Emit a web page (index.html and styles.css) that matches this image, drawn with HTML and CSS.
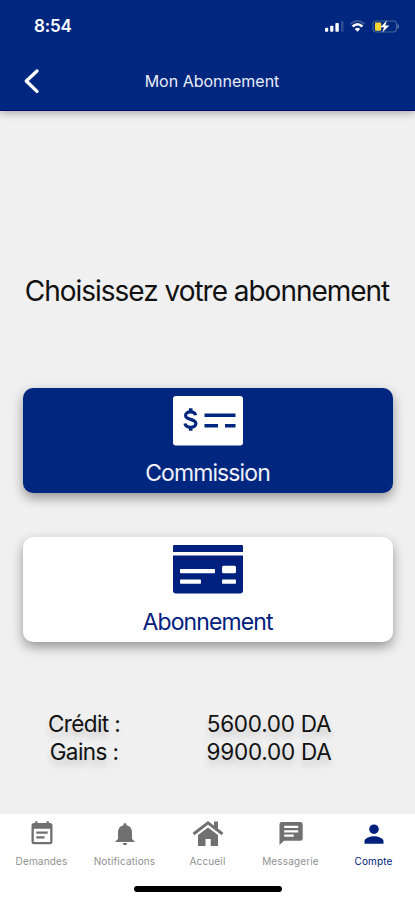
FILE: index.html
```html
<!DOCTYPE html>
<html lang="fr">
<head>
<meta charset="utf-8">
<title>Mon Abonnement</title>
<link rel="stylesheet" href="styles.css">
</head>
<body>
<div class="screen">
  <header class="header">
    <div class="status">
      <span class="clock">8:54</span>
      <svg class="status-icons" width="76" height="16" viewBox="0 0 76 16">
        <g fill="#fff">
          <rect x="0" y="9.8" width="3.2" height="4" rx=".8"/>
          <rect x="5.2" y="7.8" width="3.2" height="6" rx=".8"/>
          <rect x="10.4" y="5" width="3.4" height="8.8" rx=".8"/>
          <rect x="16" y="3" width="2.6" height="10.8" rx=".8" fill="#2d4b93"/>
        </g>
        <path d="M25.5 6Q32.5 0 39.5 6" fill="none" stroke="#3a5799" stroke-width="1.8"/>
        <path d="M27.6 8.5Q32.5 4 37.4 8.5" fill="none" stroke="#fff" stroke-width="2.6"/>
        <path d="M29.8 10.9Q32.5 8.6 35.2 10.9L32.5 13.8z" fill="#fff"/>
        <rect x="48" y="3" width="23.5" height="11" rx="3.4" fill="none" stroke="#496698" stroke-width="1.1"/>
        <path d="M72.5 5.5Q75.5 8.3 72.5 11z" fill="#7186a9"/>
        <rect x="50" y="4.4" width="6.2" height="8.4" rx="1.2" fill="#f8d734"/>
        <path d="M61.8 2.6L55.4 9.3H59L57.3 14.5L64.4 7.5H60.4z" fill="#fff"/>
      </svg>
    </div>
    <div class="titlebar">
      <svg class="back" width="18" height="28" viewBox="0 0 18 28"><path d="M15 4L4.3 14L15 24.4" fill="none" stroke="#fff" stroke-width="3.4" stroke-linecap="round" stroke-linejoin="round"/></svg>
      <h1 class="title">Mon Abonnement</h1>
    </div>
  </header>
  <main class="content">
    <h2 class="heading">Choisissez votre abonnement</h2>
    <div class="card card-primary">
      <svg width="70" height="50" viewBox="0 0 70 50">
        <rect width="70" height="49.5" rx="3" fill="#fff"/>
        <g fill="none" stroke="#00277f">
          <path d="M22.5 19.2C21.8 14.8 12.6 14.8 12.6 19.4C12.6 24.4 22.9 22.4 22.9 27.6C22.9 32.5 12.8 32.4 12 27.6" stroke-width="3.2"/>
          <path d="M17.7 12.2V17M17.7 30V34.8" stroke-width="3.6"/>
          <path d="M31.5 19.3H62.5M31.5 29.8H45M52 29.8H62.5" stroke-width="3.6"/>
        </g>
      </svg>
      <span class="card-label">Commission</span>
    </div>
    <div class="card">
      <svg width="70" height="50" viewBox="0 0 70 50">
        <path d="M1 0H69Q70 0 70 1V7H0V1Q0 0 1 0zM0 10.5H70V45.5Q70 48.5 67 48.5H3Q0 48.5 0 45.5z" fill="#00207e"/>
        <g fill="#fff">
          <rect x="7" y="24" width="35" height="4.2" rx=".8"/>
          <rect x="7" y="34.5" width="21" height="4.2" rx=".8"/>
          <rect x="49" y="20.8" width="14" height="7.4" rx="1.5"/>
          <rect x="49" y="34.5" width="14" height="4.2" rx=".8"/>
        </g>
      </svg>
      <span class="card-label">Abonnement</span>
    </div>
    <div class="balances">
      <div class="names"><span>Crédit :</span><span>Gains :</span></div>
      <div class="amounts"><span>5600.00 DA</span><span>9900.00 DA</span></div>
    </div>
  </main>
  <nav class="tabs">
    <div class="tab">
      <svg width="28" height="28" viewBox="0 0 28 28"><path fill="currentColor" fill-rule="evenodd" d="M7.2 1.3H9.5V3H18.5V1.3H20.8V3H22Q24.5 3 24.5 5.5V21.8Q24.5 24.3 22 24.3H6Q3.5 24.3 3.5 21.8V5.5Q3.5 3 6 3H7.2zM5.8 8.7V22H22.2V8.7zM8.3 11.6H19.7V13.8H8.3zM8.3 16.2H16.5V18.4H8.3z"/></svg>
      <span>Demandes</span>
    </div>
    <div class="tab">
      <svg width="28" height="28" viewBox="0 0 28 28"><path fill="currentColor" d="M12.5 5.2V4.5Q12.5 3 14 3T15.5 4.5V5.2C19.5 6 21 9 21 12.5V19L23.5 21.3V22H4.5V21.3L7 19V12.5C7 9 8.5 6 12.5 5.2zM11.7 23H16.3Q16 25.3 14 25.3T11.7 23z"/></svg>
      <span>Notifications</span>
    </div>
    <div class="tab">
      <svg width="32" height="28" viewBox="0 0 32 28"><path d="M1.5 14L16 2.9L30.5 14" fill="none" stroke="currentColor" stroke-width="2.9"/><path fill="currentColor" d="M22 1.5H26V11L22 8zM16 7.4L26 15V26H18.7V19H13.5V26H6V15z"/></svg>
      <span>Accueil</span>
    </div>
    <div class="tab">
      <svg width="28" height="28" viewBox="0 0 28 28"><path fill="currentColor" fill-rule="evenodd" d="M4.8 2H23.5Q25.7 2 25.7 4.2V18.5Q25.7 20.8 23.5 20.8H7L2.5 25V4.2Q2.5 2 4.8 2zM7.2 5.8V8H21.2V5.8zM7.2 10.2V12.4H21.2V10.2zM7.2 14.6V16.8H16.7V14.6z"/></svg>
      <span>Messagerie</span>
    </div>
    <div class="tab active">
      <svg width="28" height="28" viewBox="0 0 28 28"><circle cx="14" cy="9.2" r="4.8" fill="currentColor"/><path fill="currentColor" d="M4.5 23.7V21.2C4.5 18 10.5 16.2 14 16.2S23.5 18 23.5 21.2V23.7z"/></svg>
      <span>Compte</span>
    </div>
  </nav>
  <div class="home-area"><div class="home-bar"></div></div>
</div>
</body>
</html>
```
FILE: styles.css
```css
* { box-sizing: border-box; }
body { margin: 0; font-family: Inter, "Liberation Sans", sans-serif; }
.screen { display: flex; flex-direction: column; width: 415px; height: 900px; overflow: hidden; background: #f0f0f0; color: #111; }
.header { height: 111px; background: #00277f; border-bottom: 1px solid #000b70; box-shadow: 0 2px 8px rgba(0,0,0,.3); color: #fff; }
.status { display: flex; justify-content: space-between; align-items: center; height: 52px; padding: 0 14px 0 34px; }
.clock { font-size: 17px; font-weight: 600; line-height: 20px; letter-spacing: -.2px; }
.titlebar { display: grid; grid-template-columns: 64px 1fr 55px; align-items: center; height: 58px; }
.back { margin-left: 22px; }
.title { margin: 0; font-size: 16px; line-height: 24px; font-weight: 400; text-align: center; white-space: nowrap; color: #e9ecf7; }
.content { flex: 1; display: flex; flex-direction: column; padding: 160px 22px 0 23px; }
.heading { margin: 0 -20px 77px -22px; font-size: 28px; line-height: 40px; font-weight: 400; letter-spacing: -1.02px; text-align: center; white-space: nowrap; }
.card { display: flex; flex-direction: column; align-items: center; height: 105px; margin-bottom: 44px; padding-top: 8px; border-radius: 10px; background: #fff; color: #00207e; box-shadow: 0 5px 12px rgba(0,0,0,.38); }
.card svg { flex: none; }
.card-primary { background: #00277f; color: #f0f1fb; }
.card-label { margin-top: 12px; padding-right: 1px; font-size: 23px; line-height: 30px; letter-spacing: -.9px; }
.balances { display: grid; grid-template-columns: 122px 1fr; margin-top: 24px; font-size: 22.5px; line-height: 28px; text-shadow: 0 6px 7px rgba(0,0,0,.18); }
.names, .amounts { display: flex; flex-direction: column; align-items: center; white-space: nowrap; }
.names { letter-spacing: -.6px; }
.amounts { letter-spacing: -.25px; }
.tabs { display: grid; grid-template-columns: repeat(5, 1fr); height: 66px; padding-top: 6px; background: #fff; color: #707070; }
.tab { display: flex; flex-direction: column; align-items: center; font-size: 10px; line-height: 14px; letter-spacing: .15px; white-space: nowrap; }
.tab span { margin-top: 6px; color: #909090; }
.tab.active, .tab.active span { color: #00207e; }
.home-area { height: 20px; padding-top: 6px; background: #fff; }
.home-bar { width: 148px; height: 6px; margin: 0 auto; border-radius: 3px; background: #000; }
```
